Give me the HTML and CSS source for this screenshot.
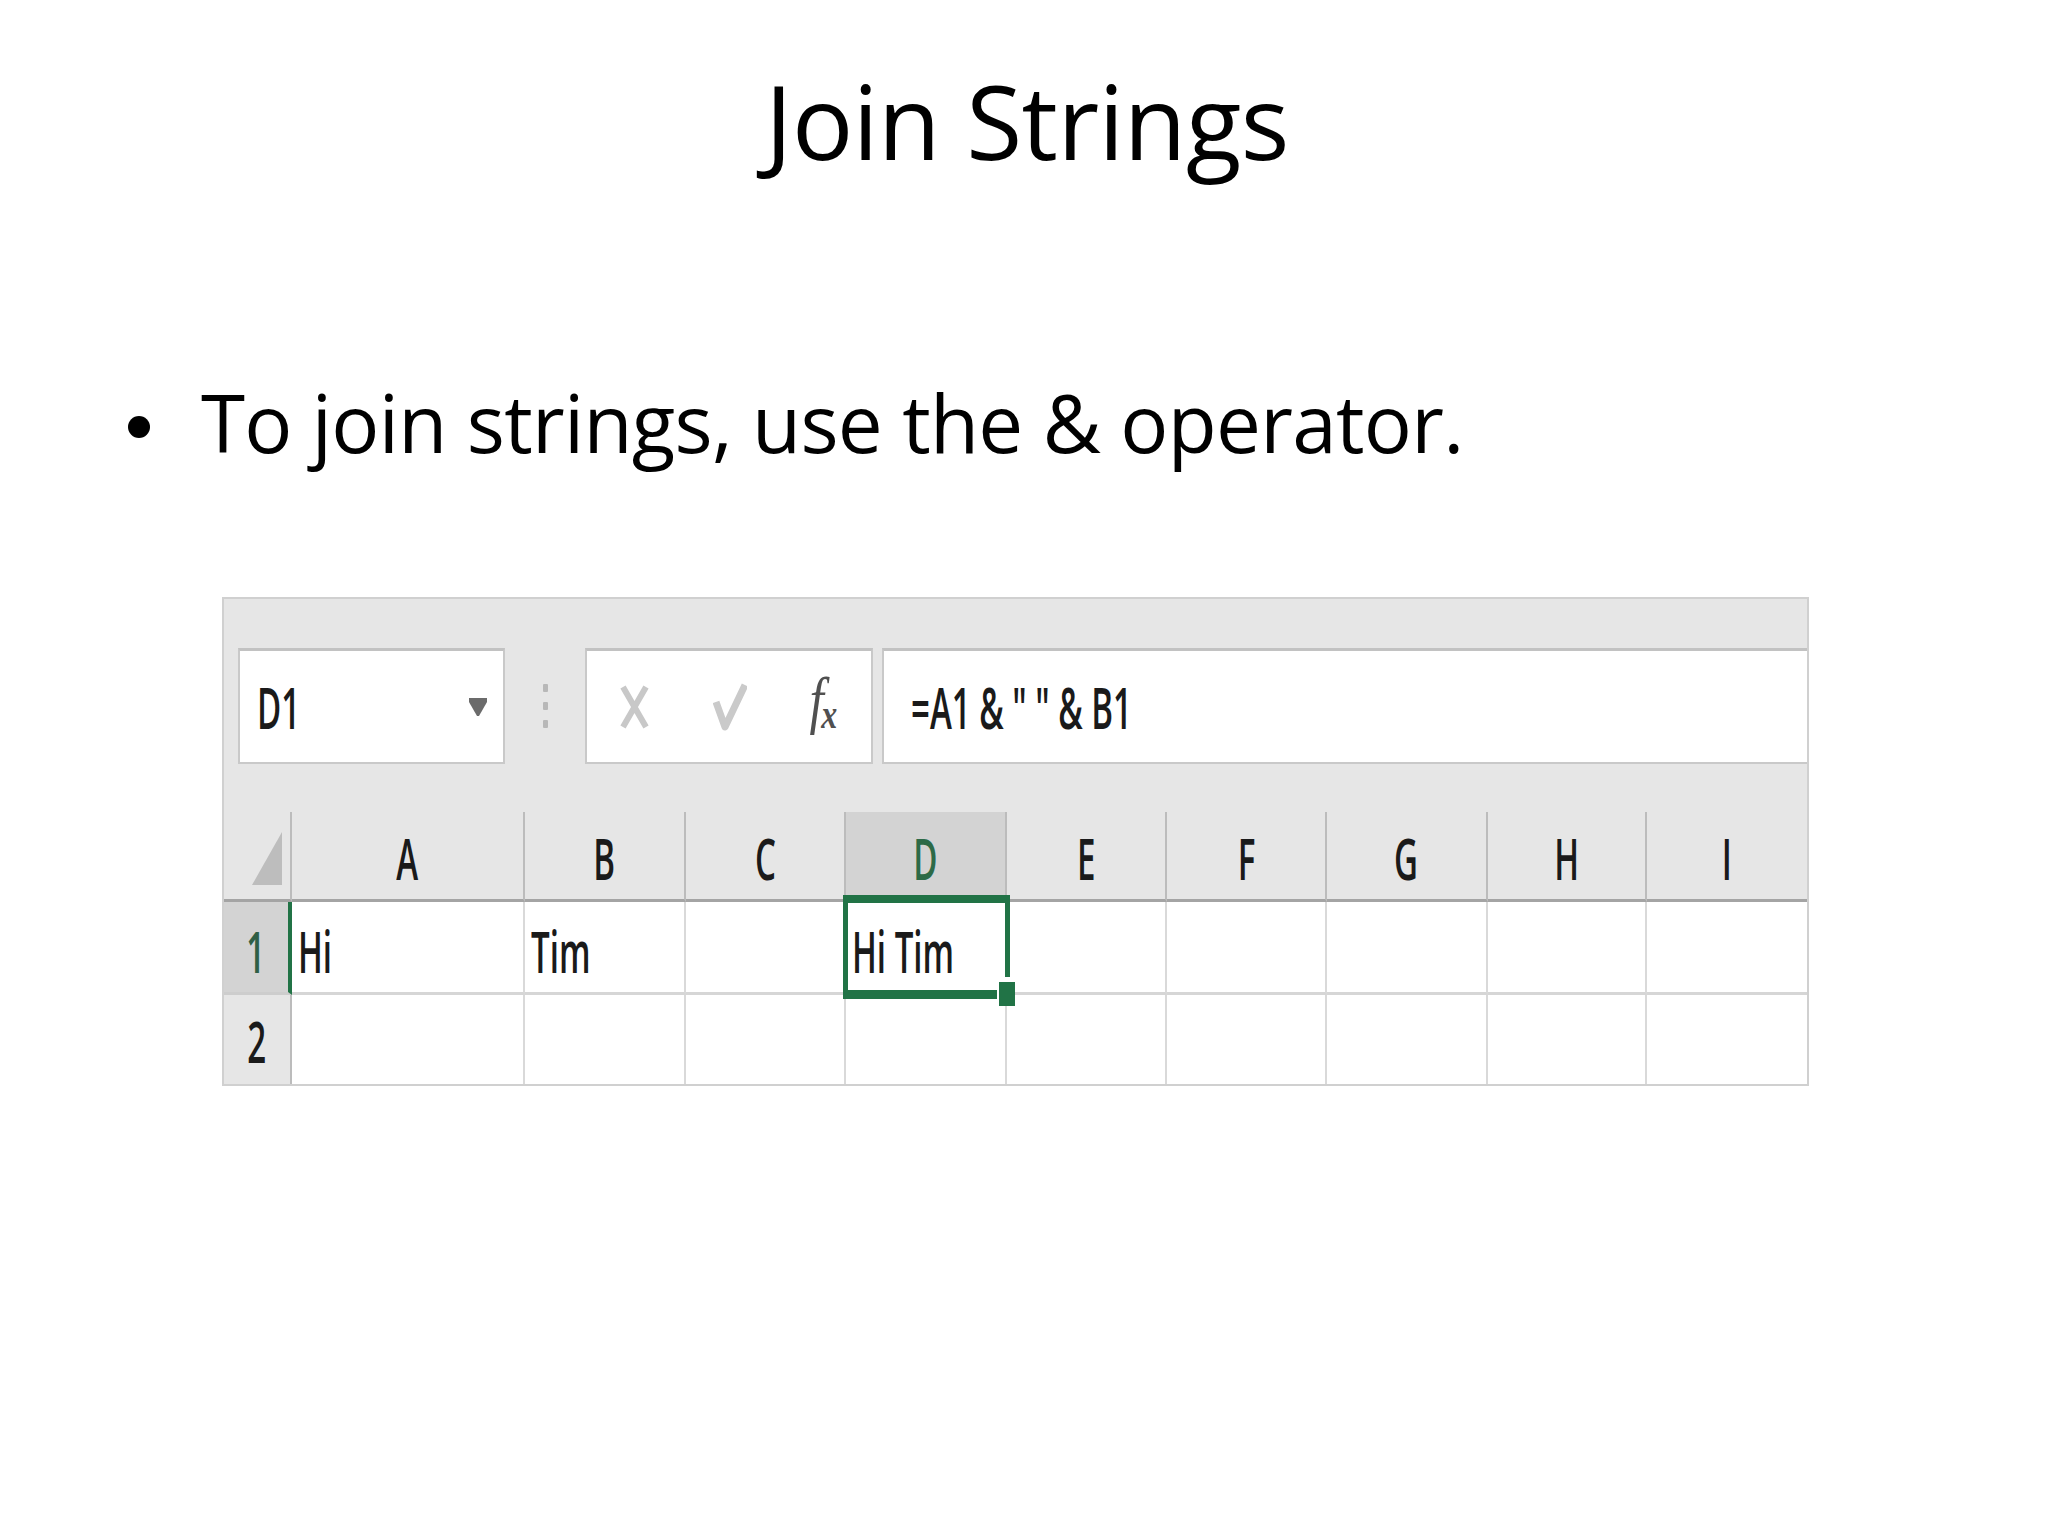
FILE: index.html
```html
<!DOCTYPE html>
<html>
<head>
<meta charset="utf-8">
<title>Join Strings</title>
<link rel="stylesheet" href="styles.css">
</head>
<body>
<div class="slide">
  <h1 class="title">Join Strings</h1>
  <div class="bullet-row">
    <span class="dot"></span>
    <span class="bullet-text">To join strings, use the &amp; operator.</span>
  </div>
  <div class="sheet">
    <div class="fbar">
      <div class="box namebox">
        <span class="ui sq">D1</span>
        <svg class="dd" width="18" height="18" viewBox="0 0 18 18"><polygon points="0,0 18,0 18,4 10,18 8,18 0,4" fill="#6b6b6b"/></svg>
      </div>
      <div class="grip"><i></i><i></i><i></i></div>
      <div class="box btnbox">
        <svg class="ico-x" width="31" height="44" viewBox="0 0 31 44"><path d="M4 2 L27 42 M27 2 L4 42" stroke="#c8c8c8" stroke-width="6" fill="none"/></svg>
        <svg class="ico-check" width="34" height="50" viewBox="0 0 34 50"><polyline points="3,20 12,45 32,3" stroke="#cacaca" stroke-width="7" fill="none" stroke-linejoin="round"/></svg>
        <svg class="ico-fx" width="40" height="60" viewBox="0 0 40 60"><text class="fx-t" x="8" y="45" transform="scale(0.8 1)"><tspan class="fx-f">f</tspan><tspan class="fx-x" dx="-3" dy="7">x</tspan></text></svg>
      </div>
      <div class="box formula"><span class="ui sq">=A1 &amp; " " &amp; B1</span></div>
    </div>
    <div class="grid">
      <div class="hdr corner"><svg width="30" height="53" viewBox="0 0 30 53"><polygon points="30,0 30,53 0,53" fill="#bdbdbd"/></svg></div>
      <div class="hdr"><span class="ui sq c">A</span></div>
      <div class="hdr"><span class="ui sq c">B</span></div>
      <div class="hdr"><span class="ui sq c">C</span></div>
      <div class="hdr hsel"><span class="ui sq c">D</span></div>
      <div class="hdr"><span class="ui sq c">E</span></div>
      <div class="hdr"><span class="ui sq c">F</span></div>
      <div class="hdr"><span class="ui sq c">G</span></div>
      <div class="hdr"><span class="ui sq c">H</span></div>
      <div class="hdr last"><span class="ui sq c">I</span></div>

      <div class="rh rsel"><span class="ui sq c">1</span></div>
      <div class="cell"><span class="ui sq">Hi</span></div>
      <div class="cell"><span class="ui sq">Tim</span></div>
      <div class="cell"></div>
      <div class="cell"><span class="ui sq">Hi Tim</span></div>
      <div class="cell"></div>
      <div class="cell"></div>
      <div class="cell"></div>
      <div class="cell"></div>
      <div class="cell last"></div>

      <div class="rh r2"><span class="ui sq c">2</span></div>
      <div class="cell r2"></div>
      <div class="cell r2"></div>
      <div class="cell r2"></div>
      <div class="cell r2"></div>
      <div class="cell r2"></div>
      <div class="cell r2"></div>
      <div class="cell r2"></div>
      <div class="cell r2"></div>
      <div class="cell r2 last"></div>

      <div class="selbox"></div>
      <div class="handle"></div>
    </div>
  </div>
</div>
</body>
</html>
```

FILE: styles.css
```css
* { box-sizing: border-box; margin: 0; padding: 0; }
html, body { width: 2048px; height: 1536px; background: #ffffff; }
body { margin: 0; font-family: "Open Sans", "Noto Sans", sans-serif; color: #000; }

.slide { width: 2048px; height: 1536px; padding-top: 70px; overflow: hidden; }

.title {
  font-weight: 400;
  font-size: 102px;
  line-height: 102px;
  height: 102px;
  text-align: center;
  letter-spacing: -0.5px;
  padding-left: 6px;
}

.bullet-row {
  display: flex;
  align-items: flex-start;
  margin-top: 210px;
  padding-left: 128px;
  height: 80px;
}
.dot {
  flex: none;
  width: 22px;
  height: 22px;
  border-radius: 50%;
  background: #000;
  margin-top: 34px;
  margin-right: 51px;
}
.bullet-text {
  font-size: 80px;
  line-height: 80px;
  white-space: nowrap;
  letter-spacing: -0.7px;
}

.sheet {
  margin-top: 135px;
  margin-left: 222px;
  width: 1587px;
  height: 489px;
  border: 2px solid #d0d0d0;
  background: #e6e6e6;
}

.fbar {
  display: flex;
  height: 165px;
  padding: 49px 0 0 14px;
}
.box {
  height: 116px;
  background: #fff;
  border: 2px solid #c9c9c9;
  border-top: 3px solid #c2c2c2;
  display: flex;
  align-items: center;
}
.namebox {
  width: 267px;
  justify-content: space-between;
  padding: 0 16px 0 17px;
}
.grip {
  width: 80px;
  display: flex;
  flex-direction: column;
  align-items: center;
  gap: 10px;
  padding-top: 36px;
}
.grip i {
  display: block;
  width: 5px;
  height: 8px;
  background: #b8b8b8;
  border-radius: 1px;
}
.btnbox {
  width: 288px;
  padding-left: 32px;
}
.ico-check { margin-left: 63px; }
.ico-fx { margin-left: 56px; margin-top: -2px; overflow: visible; }
.fx-t {
  font-family: "Liberation Serif", serif;
  font-style: italic;
  fill: #505050;
}
.fx-f { font-size: 64px; }
.fx-x { font-size: 40px; font-weight: 700; }

.formula {
  flex: 1;
  margin-left: 9px;
  border-right: none;
  padding-left: 27px;
}

.ui {
  font-family: "Open Sans", sans-serif;
  font-size: 58px;
  line-height: 58px;
  font-weight: 600;
  color: #1a1a1a;
}
.sq {
  display: inline-block;
  white-space: pre;
  transform: scaleX(0.57);
  transform-origin: left center;
}
.sq.c { transform-origin: center center; }

.grid {
  position: relative;
  margin-top: 48px;
  display: grid;
  grid-template-columns: 68px 233px 161px 160px 161px 160px 160px 161px 159px 160px;
  grid-template-rows: 90px 93px 89px;
}

.hdr {
  display: flex;
  align-items: flex-end;
  justify-content: center;
  padding-bottom: 12px;
  border-right: 2px solid #bcbcbc;
  border-bottom: 3px solid #a4a4a4;
}
.hdr.last { border-right: none; }
.hdr.hsel { background: #d3d3d3; }
.hdr.hsel .ui { color: #2d6a47; }
.corner {
  align-items: flex-start;
  justify-content: flex-start;
  padding: 20px 0 0 28px;
}

.rh {
  display: flex;
  align-items: flex-end;
  justify-content: center;
  padding-bottom: 12px;
  background: #e6e6e6;
  border-right: 2px solid #bcbcbc;
  border-bottom: 3px solid #cdcdcd;
}
.rh.rsel {
  background: #d3d3d3;
  border-right: 4px solid #217346;
}
.rh.rsel .ui { color: #2f5f45; }
.rh.r2 { border-bottom: none; padding-bottom: 14px; }

.cell {
  display: flex;
  align-items: flex-end;
  padding: 0 0 12px 6px;
  background: #fff;
  border-right: 2px solid #d9d9d9;
  border-bottom: 3px solid #d6d6d6;
}
.cell.r2 { border-bottom: none; }
.cell.last { border-right: none; }

.selbox {
  position: absolute;
  left: 619px;
  top: 83px;
  width: 167px;
  height: 104px;
  border-style: solid;
  border-color: #217346;
  border-width: 8px 5px 9px 5px;
}
.handle {
  position: absolute;
  left: 773px;
  top: 165px;
  width: 18px;
  height: 29px;
  background: #217346;
  border-top: 5px solid #fff;
  border-left: 2px solid #fff;
}
```
